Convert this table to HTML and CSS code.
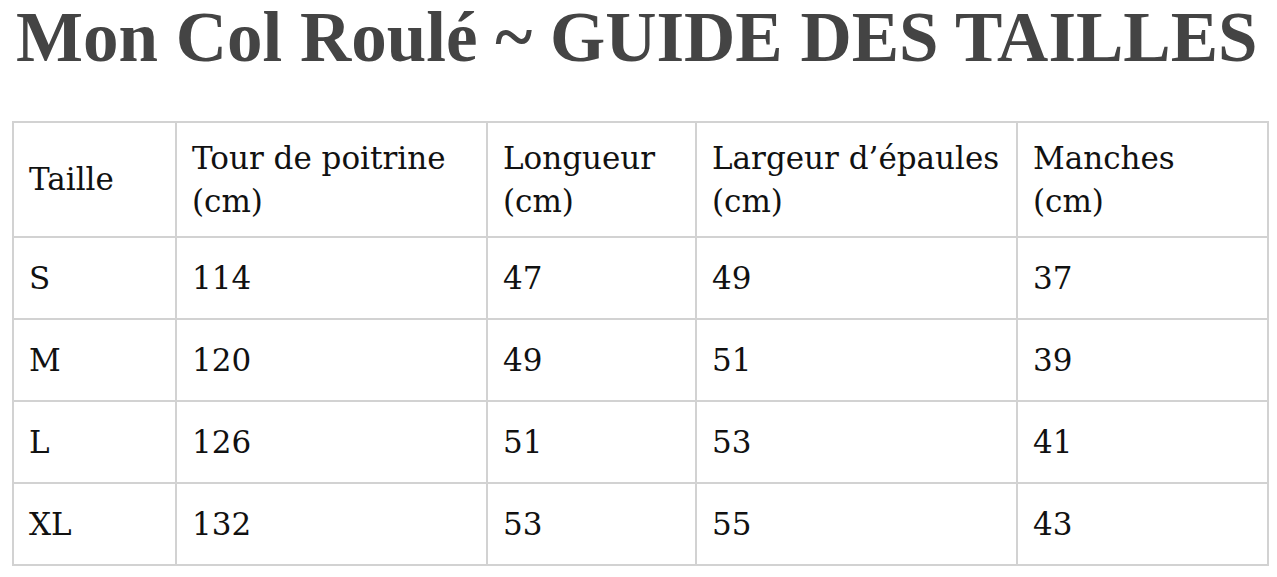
FILE: index.html
```html
<!DOCTYPE html>
<html lang="fr">
<head>
<meta charset="utf-8">
<title>Guide des tailles</title>
<link rel="stylesheet" href="styles.css">
</head>
<body>
<h1 class="title">Mon Col Roulé ~ GUIDE DES TAILLES</h1>
<table class="sizes">
  <colgroup>
    <col class="c1"><col class="c2"><col class="c3"><col class="c4"><col class="c5">
  </colgroup>
  <thead>
    <tr>
      <td>Taille</td>
      <td>Tour de poitrine (cm)</td>
      <td>Longueur (cm)</td>
      <td>Largeur d’épaules (cm)</td>
      <td>Manches (cm)</td>
    </tr>
  </thead>
  <tbody>
    <tr><td>S</td><td>114</td><td>47</td><td>49</td><td>37</td></tr>
    <tr><td>M</td><td>120</td><td>49</td><td>51</td><td>39</td></tr>
    <tr><td>L</td><td>126</td><td>51</td><td>53</td><td>41</td></tr>
    <tr><td>XL</td><td>132</td><td>53</td><td>55</td><td>43</td></tr>
  </tbody>
</table>
</body>
</html>
```
FILE: styles.css
```css
html, body {
  margin: 0;
  padding: 0;
  background: #fff;
}
body {
  padding: 0 12px;
  font-family: "DejaVu Serif", "Liberation Serif", serif;
}
.title {
  margin: 0;
  padding: 0 0 0 4px;
  font-family: "Liberation Serif", serif;
  font-weight: bold;
  font-size: 71px;
  line-height: 74px;
  color: #444;
  white-space: nowrap;
  height: 121px;
  box-sizing: border-box;
}
.sizes {
  border-collapse: collapse;
  table-layout: fixed;
  width: 1255px;
  font-size: 31px;
  color: #111;
}
.c1 { width: 163px; }
.c2 { width: 311px; }
.c3 { width: 209px; }
.c4 { width: 321px; }
.c5 { width: 251px; }
.sizes td {
  border: 2px solid #d2d2d2;
  padding: 0 15px;
  line-height: 43px;
  vertical-align: middle;
}
.sizes thead td {
  height: 113px;
}
.sizes tbody td {
  height: 80px;
}
```
